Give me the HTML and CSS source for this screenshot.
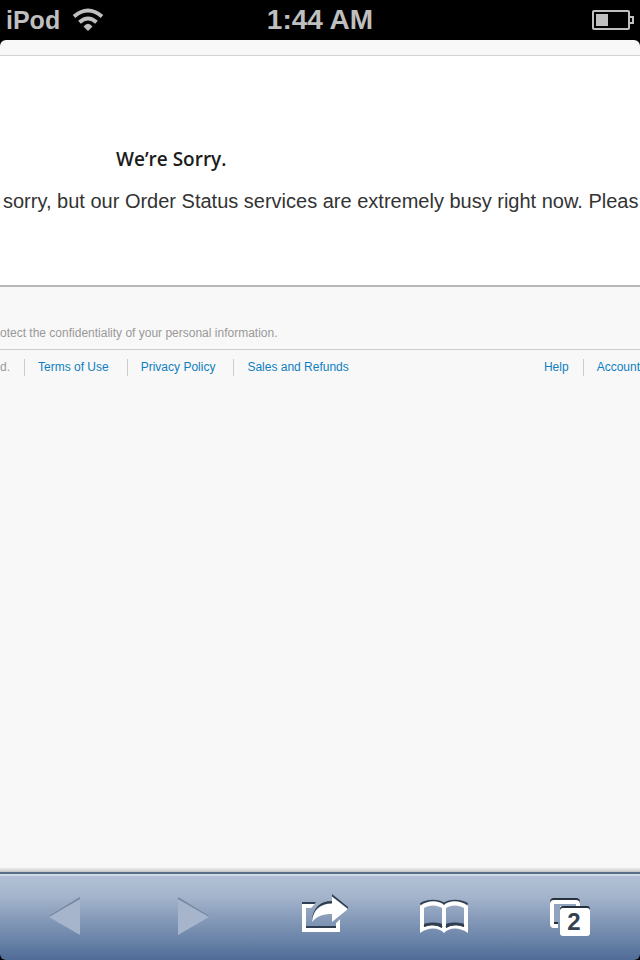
FILE: index.html
```html
<!DOCTYPE html>
<html lang="en">
<head>
<meta charset="utf-8">
<meta name="viewport" content="width=device-width, initial-scale=1">
<title>We’re Sorry.</title>
<link rel="stylesheet" href="styles.css">
</head>
<body>
<header class="status">
  <div class="carrier">
    <span>iPod</span>
    <svg width="32" height="24" viewBox="0 0 32 24" fill="none" stroke="#bfbfbf" stroke-width="4" aria-hidden="true">
      <path d="M2 8.500Q16 -3.500 30 8.500"/>
      <path d="M7.500 14.200Q16 6.800 24.500 14.200"/>
      <path d="M11.500 18.500Q16 13 20.500 18.500L16 23z" fill="#bfbfbf" stroke="none"/>
    </svg>
  </div>
  <time class="clock">1:44 AM</time>
  <svg class="battery" width="42" height="20" viewBox="0 0 42 20" aria-hidden="true">
    <rect x="1" y="1" width="36" height="18" rx="1" fill="none" stroke="#bfbfbf" stroke-width="2"/>
    <path d="M38 7h3v6h-3" fill="none" stroke="#bfbfbf" stroke-width="2"/>
    <rect x="4" y="4" width="12" height="12" fill="#bfbfbf"/>
  </svg>
</header>
<main class="page">
  <section class="message">
    <h1>We’re Sorry.</h1>
    <p>sorry, but our Order Status services are extremely busy right now. Pleas</p>
  </section>
  <footer class="footer">
    <p class="notice">otect the confidentiality of your personal information.</p>
    <div class="legal">
      <span class="rights">d.</span>
      <a href="#terms">Terms of Use</a>
      <a href="#privacy">Privacy Policy</a>
      <a href="#sales">Sales and Refunds</a>
      <a class="help" href="#help">Help</a>
      <a href="#account">Account</a>
    </div>
  </footer>
</main>
<nav class="toolbar" aria-label="Browser">
  <button type="button" aria-label="Back" disabled>
    <svg viewBox="0 0 128 86" aria-hidden="true">
      <path d="M49 42L80 23v3L50 43z" fill="#71869f"/>
      <path d="M49 43L80 25v36z" fill="#a6b5cc"/>
    </svg>
  </button>
  <button type="button" aria-label="Forward" disabled>
    <svg viewBox="0 0 128 86" aria-hidden="true">
      <path d="M81 42L50 23v3L80 43z" fill="#71869f"/>
      <path d="M81 43L50 25v36z" fill="#a6b5cc"/>
    </svg>
  </button>
  <button type="button" aria-label="Share">
    <svg viewBox="0 0 128 86" aria-hidden="true">
      <path d="M46 28h14l-3 4H46zM50 52h30v3H50zM80 49l4-4v4l-4 4z" fill="#2f3e50"/>
      <path d="M56 46C57 34 64 27 76 27v-7L92 33v3L76 32C66 32 60 38 56 48z" fill="#2f3e50"/>
      <path d="M46 30h13l-4 4h-5v20h30v-5l4-4v13H46z" fill="#fff"/>
      <path d="M56 48C57 36 64 29.500 76 29.500V22.500L92 35 76 48v-8C67 40 61 42 56 48z" fill="#fff"/>
    </svg>
  </button>
  <button type="button" aria-label="Bookmarks">
    <svg viewBox="0 0 128 86" fill="none" stroke-width="4" aria-hidden="true">
      <g stroke="#2f3e50">
        <path d="M37 31C43 26.500 55 26.500 60 31C65 26.500 77 26.500 83 31"/>
        <path d="M38 53C43 49.500 55 49.500 60 53C65 49.500 77 49.500 82 53"/>
      </g>
      <path d="M36 32C43 26 55 26 60 31C65 26 77 26 84 32V59C76 53 65 53 60 59C55 53 44 53 36 59zM40 34V53C46 50 54 51 58 54V34C53 30.500 45 30.500 40 34zM62 34V54C66 51 74 50 80 53V34C75 30.500 67 30.500 62 34z" fill="#fff" fill-rule="evenodd"/>
      <path d="M40 52C46 49 54 50 58 53M62 53C66 50 74 49 80 52" stroke="#2f3e50" stroke-width="2"/>
    </svg>
  </button>
  <button type="button" aria-label="2 open pages">
    <svg viewBox="0 0 128 86" aria-hidden="true">
      <path d="M38 31v-3a4 4 0 0 1 4-4h22a4 4 0 0 1 4 4v3z" fill="#27313e"/>
      <path d="M38 30a4 4 0 0 1 4-4h22a4 4 0 0 1 4 4v4H42v16h4v4h-4a4 4 0 0 1-4-4z" fill="#fff"/>
      <path d="M42 30h22v2H48v16h-2v2h-4z" fill="#8fa2be"/>
      <path d="M42 48h4v2h-4z" fill="#27313e"/>
      <rect x="48" y="32" width="30" height="28" rx="3" fill="#27313e"/>
      <rect x="48" y="34" width="30" height="28" rx="3" fill="#fff"/>
      <text x="62" y="56" class="count">2</text>
    </svg>
  </button>
</nav>
</body>
</html>
```
FILE: styles.css
```css
* { box-sizing: border-box; }

body {
  margin: 0;
  min-height: 100vh;
  display: flex;
  flex-direction: column;
  overflow: hidden;
  background: #000;
  font-family: "Liberation Sans", Arial, sans-serif;
}

h1, p { margin: 0; }

.status {
  height: 40px;
  padding: 0 6px;
  display: grid;
  grid-template-columns: 1fr auto 1fr;
  align-items: center;
  color: #bfbfbf;
  font-weight: bold;
}

.carrier {
  display: flex;
  align-items: center;
  gap: 12px;
  font-size: 25px;
  line-height: 36px;
}

.clock { font-size: 28px; line-height: 40px; }

.battery { justify-self: end; }

.page {
  flex: 1;
  min-width: 0;
  padding-top: 15px;
  border-radius: 6px 6px 0 0;
  background: linear-gradient(#f8f8f8 calc(100% - 5px), #c4c5c7);
  overflow: hidden;
  white-space: nowrap;
}

.message {
  height: 232px;
  padding: 88px 0 0 3px;
  border-top: 1px solid #d2d2d2;
  border-bottom: 2px solid #b8b8b8;
  background: #fff;
  color: #333;
}

.message h1 {
  padding-left: 113px;
  color: #1c1c1c;
  font-family: "Open Sans", sans-serif;
  font-size: 19px;
  font-weight: 600;
  line-height: 30px;
}

.message p {
  padding-top: 15px;
  font-size: 20px;
  line-height: 24px;
}

.footer { font-size: 12px; color: #999; }

.notice {
  padding-top: 38px;
  padding-bottom: 8px;
  line-height: 16px;
  border-bottom: 1px solid #ccc;
}

.legal {
  display: flex;
  padding-top: 9px;
  line-height: 17px;
}

.legal > * {
  flex: none;
  padding: 0 18px 0 13px;
  border-left: 1px solid #ccc;
  color: #0f7fc0;
  text-decoration: none;
}

.legal .rights {
  padding: 0 14px 0 0;
  border-left: 0;
  color: #999;
}

.legal .help {
  margin-left: auto;
  padding-right: 14px;
  border-left: 0;
}

.legal > :last-child { padding-right: 0; }

.toolbar {
  display: grid;
  grid-template-columns: repeat(5, 1fr);
  border-top: 2px solid #586e87;
  border-radius: 0 0 6px 6px;
  background: linear-gradient(#cfdae6 2px, #b1c0d4 2px, #a5b5cc 25%, #4f6c97);
}

.toolbar button {
  padding: 0;
  border: 0;
  background: none;
}

.toolbar svg {
  display: block;
  width: 100%;
  height: 86px;
}

.count {
  fill: #34414f;
  font-size: 24px;
  font-weight: bold;
  text-anchor: middle;
}
```
